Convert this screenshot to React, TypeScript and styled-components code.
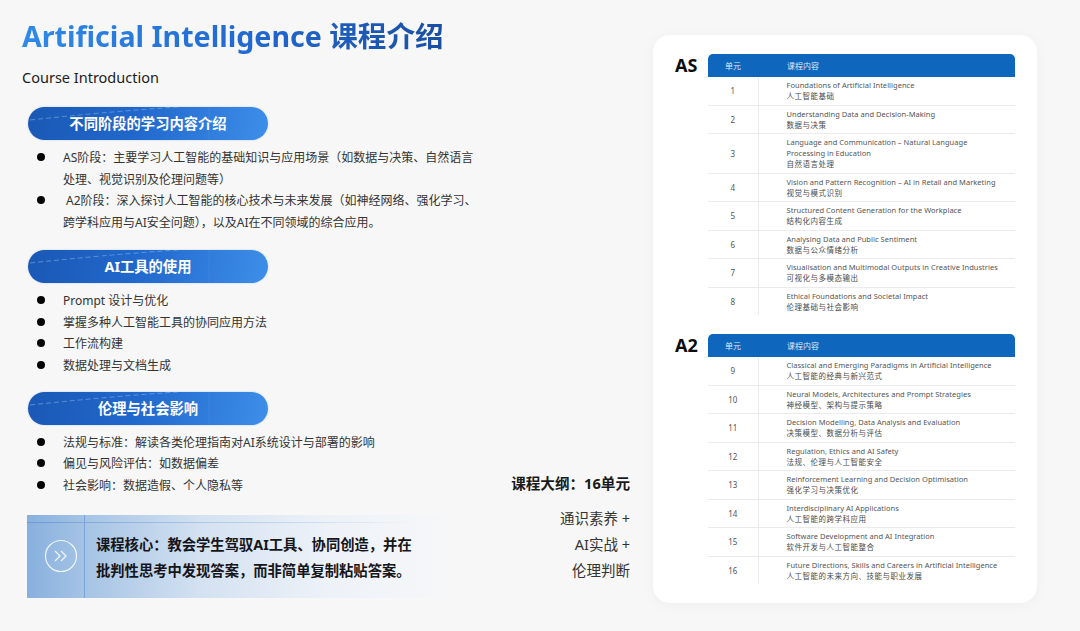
import React from "react";
import styled, { createGlobalStyle } from "styled-components";

const Global = createGlobalStyle`
  html, body { margin: 0; padding: 0; background: #f7f7f8; }
  body { font-family: "Noto Sans", "Noto Sans CJK SC", sans-serif; }
  * { box-sizing: border-box; }
`;

const Page = styled.div`
  width: 1080px;
  height: 631px;
  overflow: hidden;
  display: flex;
  background: #f7f7f8;
`;
const Left = styled.div`
  width: 653px;
  padding: 16px 23px 0 22px;
  display: flex;
`;
const Main = styled.div`
  width: 470px;
  flex: none;
  display: flex;
  flex-direction: column;
`;
const Aside = styled.div`
  flex: 1;
  display: flex;
  flex-direction: column;
  justify-content: flex-end;
  align-items: flex-end;
  padding-bottom: 48px;
`;
const Title = styled.h1`
  margin: 0;
  font-size: 28.6px;
  line-height: 40px;
  font-weight: 700;
  white-space: nowrap;
  width: max-content;
  background: linear-gradient(90deg, #2f8ae9 0%, #2168cf 55%, #1a4fa3 100%);
  -webkit-background-clip: text;
  background-clip: text;
  color: transparent;
`;
const Subtitle = styled.div`
  margin-top: 11px;
  font-size: 14.5px;
  line-height: 20px;
  color: #1c1c1c;
`;
const Pill = styled.div<{ $top: number }>`
  position: relative;
  overflow: hidden;
  margin: ${(p) => p.$top}px 0 0 6px;
  width: 240px;
  height: 33px;
  flex: none;
  border-radius: 17px;
  display: flex;
  align-items: center;
  justify-content: center;
  padding-bottom: 2px;
  background: linear-gradient(100deg, #1a58b4 0%, #2168cc 45%, #3d8ee9 100%);
  color: #fff;
  font-size: 14.3px;
  font-weight: 700;
  box-shadow: 0 0 2px rgba(60, 130, 220, 0.35);
`;
const PillDeco = styled.svg`
  position: absolute;
  inset: 0;
  width: 100%;
  height: 100%;
`;
const PillText = styled.span`
  position: relative;
`;
const List = styled.ul<{ $top: number }>`
  list-style: none;
  margin: ${(p) => p.$top}px 0 0;
  padding: 0 0 0 15px;
  display: flex;
  flex-direction: column;
`;
const Item = styled.li`
  display: flex;
  font-size: 12px;
  line-height: 21.7px;
  color: #333;
`;
const Dot = styled.span`
  flex: none;
  width: 8px;
  height: 8px;
  margin: 6px 18px 0 0;
  border-radius: 50%;
  background: #050505;
`;
const ItemText = styled.span<{ $indent?: boolean }>`
  white-space: pre-line;
  text-indent: ${(p) => (p.$indent ? "3px" : "0")};
`;
const Callout = styled.div`
  margin: 18px 0 0 5px;
  width: 430px;
  height: 83px;
  flex: none;
  display: flex;
  position: relative;
  background: linear-gradient(90deg, #88b0de 0%, #a6c4e5 14%, #d3e1f1 40%, #edf2f8 70%, #f7f7f8 100%);
`;
const CalloutLine = styled.div`
  position: absolute;
  left: 0;
  right: 40px;
  top: 7px;
  height: 1px;
  background: linear-gradient(90deg, #6b9ad6, #b5cde9 50%, rgba(247, 247, 248, 0));
`;
const CalloutIcon = styled.div`
  width: 58px;
  flex: none;
  display: flex;
  align-items: center;
  justify-content: center;
  padding-left: 10px;
  border-right: 1px solid #7ba4d8;
`;
const CalloutText = styled.div`
  padding: 17px 0 0 11px;
  font-size: 14.3px;
  line-height: 26.3px;
  font-weight: 700;
  color: #15151a;
  white-space: pre-line;
`;
const OutlineHead = styled.div`
  font-size: 14.6px;
  font-weight: 700;
  line-height: 20px;
  margin-bottom: 12px;
  color: #1a1a1a;
`;
const OutlineLine = styled.div`
  font-size: 14.5px;
  line-height: 26px;
  color: #333;
`;
const Right = styled.div`
  padding-top: 35px;
`;
const Card = styled.div`
  width: 384px;
  height: 568px;
  background: #fff;
  border-radius: 17px;
  box-shadow: 0 2px 14px rgba(0, 0, 0, 0.04);
  padding: 19px 21px 0 22px;
  display: flex;
  flex-direction: column;
  gap: 19px;
`;
const Group = styled.div`
  display: flex;
`;
const GroupLabel = styled.div`
  width: 33px;
  flex: none;
  font-size: 18px;
  line-height: 22px;
  font-weight: 700;
  color: #0c0c0c;
`;
const Table = styled.table`
  width: 307px;
  border-collapse: collapse;
  table-layout: fixed;
`;
const HeadRow = styled.tr`
  height: 23px;
`;
const HeadCell = styled.th<{ $first?: boolean }>`
  background: #0f67bd;
  color: #dfe9f5;
  font-size: 8px;
  font-weight: 400;
  padding: 0 0 0 ${(p) => (p.$first ? "0" : "29px")};
  width: ${(p) => (p.$first ? "50px" : "auto")};
  text-align: ${(p) => (p.$first ? "center" : "left")};
  border-radius: ${(p) => (p.$first ? "5px 0 0 0" : "0 5px 0 0")};
`;
const Row = styled.tr`
  border-bottom: 1px solid #ebebeb;
  &:last-child {
    border-bottom: none;
  }
`;
const NumCell = styled.td`
  text-align: center;
  font-size: 8px;
  color: #555;
  border-right: 1px solid #ececec;
  padding: 0;
`;
const ContentCell = styled.td`
  padding: 3px 0 2.5px 28px;
  font-size: 7.5px;
  line-height: 11px;
  color: #555;
  letter-spacing: 0.03px;
`;
const Zh = styled.div`
  letter-spacing: 0.5px;
  color: #4a4a4a;
`;

type Unit = { n: number; en: string[]; zh: string };

const AS: Unit[] = [
  { n: 1, en: ["Foundations of Artificial Intelligence"], zh: "人工智能基础" },
  { n: 2, en: ["Understanding Data and Decision-Making"], zh: "数据与决策" },
  { n: 3, en: ["Language and Communication – Natural Language", "Processing in Education"], zh: "自然语言处理" },
  { n: 4, en: ["Vision and Pattern Recognition – AI in Retail and Marketing"], zh: "视觉与模式识别" },
  { n: 5, en: ["Structured Content Generation for the Workplace"], zh: "结构化内容生成" },
  { n: 6, en: ["Analysing Data and Public Sentiment"], zh: "数据与公众情绪分析" },
  { n: 7, en: ["Visualisation and Multimodal Outputs in Creative Industries"], zh: "可视化与多模态输出" },
  { n: 8, en: ["Ethical Foundations and Societal Impact"], zh: "伦理基础与社会影响" },
];
const A2: Unit[] = [
  { n: 9, en: ["Classical and Emerging Paradigms in Artificial Intelligence"], zh: "人工智能的经典与新兴范式" },
  { n: 10, en: ["Neural Models, Architectures and Prompt Strategies"], zh: "神经模型、架构与提示策略" },
  { n: 11, en: ["Decision Modelling, Data Analysis and Evaluation"], zh: "决策模型、数据分析与评估" },
  { n: 12, en: ["Regulation, Ethics and AI Safety"], zh: "法规、伦理与人工智能安全" },
  { n: 13, en: ["Reinforcement Learning and Decision Optimisation"], zh: "强化学习与决策优化" },
  { n: 14, en: ["Interdisciplinary AI Applications"], zh: "人工智能的跨学科应用" },
  { n: 15, en: ["Software Development and AI Integration"], zh: "软件开发与人工智能整合" },
  { n: 16, en: ["Future Directions, Skills and Careers in Artificial Intelligence"], zh: "人工智能的未来方向、技能与职业发展" },
];

const UnitTable = ({ label, units }: { label: string; units: Unit[] }) => (
  <Group>
    <GroupLabel>{label}</GroupLabel>
    <Table>
      <thead>
        <HeadRow>
          <HeadCell $first>单元</HeadCell>
          <HeadCell>课程内容</HeadCell>
        </HeadRow>
      </thead>
      <tbody>
        {units.map((u) => (
          <Row key={u.n}>
            <NumCell>{u.n}</NumCell>
            <ContentCell>
              {u.en.map((l) => (
                <div key={l}>{l}</div>
              ))}
              <Zh>{u.zh}</Zh>
            </ContentCell>
          </Row>
        ))}
      </tbody>
    </Table>
  </Group>
);

const SectionPill = ({ top, children }: { top: number; children: React.ReactNode }) => (
  <Pill $top={top}>
    <PillDeco viewBox="0 0 240 33" preserveAspectRatio="none">
      <path d="M2 13 C50 8 90 4 150 0" stroke="#9cc4f2" strokeWidth="0.6" strokeDasharray="5 3" fill="none" opacity="0.8" />
      <path d="M181 0 V33" stroke="#7fb1ec" strokeWidth="0.5" fill="none" opacity="0.35" />
    </PillDeco>
    <PillText>{children}</PillText>
  </Pill>
);

const Bullet = ({ children, indent }: { children: React.ReactNode; indent?: boolean }) => (
  <Item>
    <Dot />
    <ItemText $indent={indent}>{children}</ItemText>
  </Item>
);

export default function App() {
  return (
    <Page>
      <Global />
      <Left>
        <Main>
          <Title>Artificial Intelligence 课程介绍</Title>
          <Subtitle>Course Introduction</Subtitle>
          <SectionPill top={20}>不同阶段的学习内容介绍</SectionPill>
          <List $top={7}>
            <Bullet>{"AS阶段：主要学习人工智能的基础知识与应用场景（如数据与决策、自然语言\n处理、视觉识别及伦理问题等）"}</Bullet>
            <Bullet indent>{"A2阶段：深入探讨人工智能的核心技术与未来发展（如神经网络、强化学习、\n跨学科应用与AI安全问题），以及AI在不同领域的综合应用。"}</Bullet>
          </List>
          <SectionPill top={16}>AI工具的使用</SectionPill>
          <List $top={7}>
            <Bullet>Prompt 设计与优化</Bullet>
            <Bullet>掌握多种人工智能工具的协同应用方法</Bullet>
            <Bullet>工作流构建</Bullet>
            <Bullet>数据处理与文档生成</Bullet>
          </List>
          <SectionPill top={15}>伦理与社会影响</SectionPill>
          <List $top={7}>
            <Bullet>法规与标准：解读各类伦理指南对AI系统设计与部署的影响</Bullet>
            <Bullet>偏见与风险评估：如数据偏差</Bullet>
            <Bullet>社会影响：数据造假、个人隐私等</Bullet>
          </List>
          <Callout>
            <CalloutLine />
            <CalloutIcon>
              <svg width="34" height="34" viewBox="0 0 34 34" fill="none" stroke="#f0f5fb">
                <circle cx="17" cy="17" r="15.5" strokeWidth="1.2" />
                <path d="M11 12 L16 17 L11 22 M17 12 L22 17 L17 22" strokeWidth="1.3" />
              </svg>
            </CalloutIcon>
            <CalloutText>{"课程核心：教会学生驾驭AI工具、协同创造，并在\n批判性思考中发现答案，而非简单复制粘贴答案。"}</CalloutText>
          </Callout>
        </Main>
        <Aside>
          <OutlineHead>课程大纲：16单元</OutlineHead>
          <OutlineLine>通识素养 +</OutlineLine>
          <OutlineLine>AI实战 +</OutlineLine>
          <OutlineLine>伦理判断</OutlineLine>
        </Aside>
      </Left>
      <Right>
        <Card>
          <UnitTable label="AS" units={AS} />
          <UnitTable label="A2" units={A2} />
        </Card>
      </Right>
    </Page>
  );
}
